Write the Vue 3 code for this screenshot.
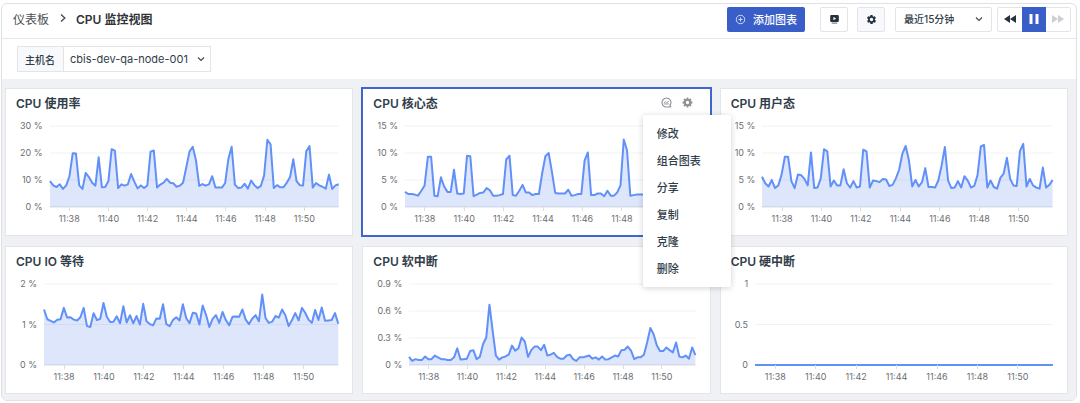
<script setup>
import { ref } from 'vue'

const host = ref('cbis-dev-qa-node-001')
const range = ref('最近15分钟')
const menuItems = ['修改', '组合图表', '分享', '复制', '克隆', '删除']
const times = ['11:38', '11:40', '11:42', '11:44', '11:46', '11:48', '11:50']

const charts = [
  {
    title: 'CPU 使用率', max: 30, ticks: ['30 %', '20 %', '10 %', '0 %'],
    data: [9.6, 8, 7.4, 8.4, 6.7, 8, 11.4, 19.9, 19.8, 8, 6.7, 12.6, 11.1, 9, 7.9, 18.4, 7.3, 7.4, 9.5, 21.4, 20.9, 7, 8.4, 7.9, 8.4, 12.2, 9.4, 6.9, 8, 7, 8, 20.5, 20.9, 7.2, 8.3, 9, 10.4, 9, 8.8, 7.5, 7.9, 9, 14.6, 20.5, 22.3, 17.3, 7.8, 8.5, 7.9, 8.4, 11.4, 7.2, 7.2, 7.2, 8.9, 17.9, 22.3, 8.3, 7, 7.2, 8.6, 6.8, 9.8, 8.1, 7, 7.8, 11.7, 24.9, 23.2, 7, 8.1, 7.3, 7.3, 9, 11.1, 17.7, 9.6, 8.1, 8, 20.6, 22.6, 7.2, 8.9, 8, 7.5, 6.8, 12, 6.7, 8, 8.4]
  },
  {
    title: 'CPU 核心态', max: 15, ticks: ['15 %', '10 %', '5 %', '0 %'], active: true,
    data: [2.8, 2.4, 2.4, 2.3, 2.1, 3, 4, 9.3, 9.3, 2.1, 2, 5.5, 3.8, 2.8, 2.8, 6.9, 2.5, 2.4, 2.5, 9.5, 9.4, 2, 2.3, 2.6, 2.7, 3.5, 3.1, 2.1, 2.1, 2.2, 2.4, 8.8, 9.5, 2.2, 2.1, 3, 4.1, 2.7, 2.7, 2.2, 2.4, 2.4, 6.2, 9.4, 10, 6.5, 2.6, 2.5, 2.5, 2.5, 3.2, 2.1, 2.2, 2.4, 2.4, 8.6, 10.1, 2.2, 2.2, 2.5, 2.5, 2, 3, 2.1, 2.1, 2.7, 4, 12.5, 10.5, 2.1, 2.2, 2.3, 2.3, 2.3, 2.8, 6.2, 2.6, 2.3, 2.4, 9.2, 9.8, 2.3, 2.5, 2.2, 2.1, 2.3, 3.4, 2.1, 2.3, 2.4]
  },
  {
    title: 'CPU 用户态', max: 15, ticks: ['15 %', '10 %', '5 %', '0 %'],
    data: [5.6, 4.4, 3.8, 5, 3.5, 4, 6, 9.3, 9.3, 4.8, 3.5, 6, 5.9, 5.2, 4, 10.1, 3.5, 3.6, 5.3, 10.7, 10.3, 3.8, 4.9, 4, 4, 7, 4.4, 3.6, 4.8, 3.6, 3.8, 10.6, 10.3, 3.6, 4.9, 4.8, 4.6, 5.2, 5.1, 3.9, 4.1, 5.3, 6.9, 9.9, 11.3, 8.6, 3.8, 5, 3.8, 4.6, 7.2, 3.7, 3.7, 3.6, 4.9, 7.7, 11.1, 4.9, 3.5, 3.6, 4.8, 3.6, 5.7, 4.9, 3.6, 3.9, 5.9, 11.2, 11.5, 3.6, 4.9, 3.7, 3.4, 5.4, 6.2, 9.1, 5.2, 4, 3.9, 10.4, 11.7, 3.8, 5.2, 4, 3.6, 3.4, 7.3, 3.6, 4.1, 5]
  },
  {
    title: 'CPU IO 等待', max: 2, ticks: ['2 %', '1 %', '0 %'],
    data: [1.37, 1.13, 1.09, 1.05, 1.12, 1.13, 1.41, 1.17, 1.18, 1.12, 1.1, 1.18, 1.41, 0.96, 0.94, 1.28, 1.11, 1.14, 1.53, 1.19, 1.06, 1.07, 1.2, 1.03, 1.45, 1.05, 1.23, 1.03, 1.21, 1, 1.51, 1.08, 1.01, 0.98, 1.15, 1.14, 1.5, 1.01, 0.96, 1.11, 1.18, 1.1, 1.5, 1.16, 1.03, 1.29, 1.27, 1, 1.47, 1.24, 0.94, 1.14, 1.23, 1.04, 1.31, 1.11, 0.98, 1.19, 1.2, 1.19, 1.37, 1.12, 1.01, 1.15, 1.23, 1.08, 1.74, 1.16, 1.04, 1.07, 1.21, 1.17, 1.37, 1.23, 0.96, 1.11, 1.28, 1.1, 1.41, 1.29, 1.12, 1.04, 1.36, 1.11, 1.42, 1.09, 1.1, 1.11, 1.28, 1.02]
  },
  {
    title: 'CPU 软中断', max: 0.9, ticks: ['0.9 %', '0.6 %', '0.3 %', '0 %'],
    data: [0.09, 0.045, 0.065, 0.055, 0.055, 0.095, 0.065, 0.065, 0.105, 0.085, 0.065, 0.063, 0.055, 0.055, 0.085, 0.185, 0.06, 0.065, 0.07, 0.155, 0.165, 0.065, 0.09, 0.23, 0.305, 0.67, 0.38, 0.105, 0.06, 0.085, 0.095, 0.115, 0.215, 0.16, 0.185, 0.305, 0.26, 0.09, 0.165, 0.205, 0.205, 0.165, 0.225, 0.105, 0.115, 0.135, 0.09, 0.07, 0.07, 0.105, 0.115, 0.065, 0.045, 0.085, 0.085, 0.095, 0.105, 0.07, 0.085, 0.06, 0.095, 0.06, 0.065, 0.085, 0.105, 0.095, 0.165, 0.17, 0.205, 0.16, 0.065, 0.085, 0.085, 0.115, 0.25, 0.41, 0.345, 0.22, 0.155, 0.155, 0.195, 0.165, 0.14, 0.25, 0.095, 0.085, 0.105, 0.07, 0.195, 0.11]
  },
  {
    title: 'CPU 硬中断', max: 1, ticks: ['1', '0.5', '0'],
    data: [0, 0, 0, 0]
  }
].map((c) => {
  const line = c.data
    .map((v, i) => `${((i / (c.data.length - 1)) * 100).toFixed(2)},${(100 - (v / c.max) * 100).toFixed(2)}`)
    .join(' ')
  const rules = c.ticks.slice(0, -1).map((_, i) => (i / (c.ticks.length - 1)) * 100)
  return { ...c, line, area: `0,100 ${line} 100,100`, rules }
})
</script>

<template>
  <div class="frame">
    <header class="topbar">
      <nav class="crumbs">
        <a href="#">仪表板</a>
        <svg class="crumb-arrow" viewBox="0 0 8 10"><path d="M2 1.5 5.8 5 2 8.5" /></svg>
        <h1>CPU 监控视图</h1>
      </nav>
      <button class="add" type="button">
        <svg viewBox="0 0 12 12"><circle cx="6" cy="6" r="4.6" /><path d="M6 3.8v4.4M3.8 6h4.4" /></svg>
        添加图表
      </button>
      <button class="square tv" type="button" aria-label="投屏">
        <svg viewBox="0 0 12 12">
          <path fill="#26323d" fill-rule="evenodd" d="M2.500 1.200h7q1.200 0 1.200 1.200v5.200q0 1.200-1.200 1.200h-7q-1.200 0-1.200-1.200v-5.200q0-1.200 1.200-1.200zM4.800 3.200v3.600l3-1.800z" />
          <path fill="#7f878f" d="M3 9.200h6v1.400h-6z" />
        </svg>
      </button>
      <button class="square tinted" type="button" aria-label="设置">
        <svg viewBox="0 0 24 24"><path fill="#26323d" d="M19.400 13a7.500 7.500 0 0 0 0-2l2.100-1.600a.5.5 0 0 0 .1-.7l-2-3.400a.5.5 0 0 0-.6-.2l-2.500 1a7.300 7.300 0 0 0-1.700-1l-.4-2.600a.5.500 0 0 0-.5-.5h-4a.5.500 0 0 0-.5.500l-.4 2.600a7.300 7.300 0 0 0-1.700 1l-2.500-1a.5.500 0 0 0-.6.200l-2 3.400a.5.500 0 0 0 .1.700L4.600 11a7.500 7.500 0 0 0 0 2l-2.100 1.600a.5.500 0 0 0-.1.700l2 3.400c.1.200.4.300.6.200l2.500-1a7.300 7.300 0 0 0 1.700 1l.4 2.600c0 .3.200.5.5.5h4c.3 0 .5-.2.5-.5l.4-2.600a7.300 7.300 0 0 0 1.700-1l2.500 1c.2.1.5 0 .6-.2l2-3.400a.5.500 0 0 0-.1-.7zM12 15.800a3.800 3.800 0 1 1 0-7.600 3.800 3.800 0 0 1 0 7.600z" /></svg>
      </button>
      <div class="pick range">
        <select v-model="range" aria-label="时间范围"><option>最近15分钟</option></select>
        <svg class="chev" viewBox="0 0 10 10"><path d="M2 3.500 5 6.500 8 3.500" /></svg>
      </div>
      <div class="player">
        <button type="button" aria-label="后退"><svg viewBox="0 0 14 10"><path d="M7 1v8L1 5zM13 1v8L7 5z" /></svg></button>
        <button type="button" class="on" aria-label="暂停"><svg viewBox="0 0 14 10"><path d="M2.500 0h3v10h-3zM8.500 0h3v10h-3z" /></svg></button>
        <button type="button" class="off" aria-label="前进" disabled><svg viewBox="0 0 14 10"><path d="M1 1v8l6-4zM7 1v8l6-4z" /></svg></button>
      </div>
    </header>

    <div class="filters">
      <div class="field">
        <label for="host">主机名</label>
        <div class="pick host">
          <select id="host" v-model="host"><option>cbis-dev-qa-node-001</option></select>
          <svg class="chev" viewBox="0 0 10 10"><path d="M2 3.500 5 6.500 8 3.500" /></svg>
        </div>
      </div>
    </div>

    <main class="board">
      <section v-for="c in charts" :key="c.title" class="card" :class="{ active: c.active }">
        <div class="head">
          <h2>{{ c.title }}</h2>
          <div v-if="c.active" class="tools">
            <button type="button" aria-label="探索">
              <svg viewBox="0 0 12 12" fill="none" stroke="#8d9196"><path stroke-width="1.200" d="M10.700 10.900H6A4.900 4.900 0 1 1 9.700 9.200L11 10.900" /><path d="M3.200 6.800 4.800 5l1.400 1.300L8.600 4.600M3.400 7.600h5.200" /></svg>
            </button>
            <button type="button" aria-label="图表设置" aria-haspopup="menu" aria-expanded="true">
              <svg viewBox="0 0 12 12" fill="none" stroke="#8d9196"><circle cx="6" cy="6" r="3" stroke-width="2.400" /><path stroke-width="2" d="M6 .6v1.600M6 9.800v1.600M.6 6h1.600M9.800 6h1.600M2.200 2.200l1.100 1.100M8.700 8.700l1.100 1.100M2.200 9.800l1.100-1.100M8.700 3.300l1.100-1.100" /></svg>
            </button>
          </div>
        </div>
        <div class="chart">
          <div class="yaxis"><span v-for="t in c.ticks" :key="t">{{ t }}</span></div>
          <svg class="plot" viewBox="0 0 100 100" preserveAspectRatio="none">
            <line v-for="y in c.rules" :key="y" class="rule" x1="0" x2="100" :y1="y" :y2="y" />
            <line class="base" x1="0" x2="100" y1="100" y2="100" />
            <polygon class="area" :points="c.area" />
            <polyline class="line" :points="c.line" />
          </svg>
          <div class="xaxis"><span v-for="t in times" :key="t">{{ t }}</span></div>
        </div>
        <ul v-if="c.active" class="menu" role="menu">
          <li v-for="m in menuItems" :key="m" role="none"><button type="button" role="menuitem">{{ m }}</button></li>
        </ul>
      </section>
    </main>
  </div>
</template>

<style>
body {
  background: #fff;
}
</style>

<style scoped>
* {
  box-sizing: border-box;
}
.frame {
  margin: 3px 3px 2px 1px;
  border: 1px solid #e0e1e3;
  border-radius: 6px;
  overflow: hidden;
  background: #fff;
  color: #313d49;
  font-family: Inter, "Noto Sans CJK SC", sans-serif;
  font-size: 11px;
}
button,
select {
  font: inherit;
  color: inherit;
  margin: 0;
  padding: 0;
  border: 0;
  border-radius: 0;
  background: none;
}
h1,
h2,
ul {
  margin: 0;
  padding: 0;
}
svg {
  display: block;
}
.topbar {
  display: flex;
  align-items: center;
  height: 35px;
  padding: 0 5px 4px 11px;
  border-bottom: 1px solid #e6e7e9;
}
.crumbs {
  display: flex;
  align-items: center;
  flex: 1;
  padding-bottom: 2px;
  font-size: 12px;
  white-space: nowrap;
}
.crumbs a {
  color: #4c4f53;
  text-decoration: none;
}
.crumbs h1 {
  font-size: 12px;
  font-weight: 600;
  color: #303236;
}
.crumb-arrow {
  width: 8px;
  height: 10px;
  margin: 0 9px 0 10px;
  fill: none;
  stroke: #4c4f53;
  stroke-width: 1.4;
}
.add {
  display: flex;
  align-items: center;
  gap: 7px;
  height: 25px;
  padding: 0 8px;
  margin-right: 15px;
  border-radius: 2px;
  background: #3a5ec8;
  color: #fff;
  font-weight: 500;
}
.add svg {
  width: 11px;
  height: 11px;
  fill: none;
  stroke: #dbe3f8;
}
.square {
  display: flex;
  align-items: center;
  justify-content: center;
  width: 28px;
  height: 25px;
  margin-right: 9px;
  border: 1px solid #e2e4e8;
  border-radius: 2px;
}
.square svg {
  width: 11px;
  height: 11px;
}
.tinted {
  background: #f8f9fc;
}
.pick {
  display: grid;
  align-items: center;
}
.pick > * {
  grid-area: 1 / 1;
}
.pick select {
  appearance: none;
  width: 100%;
  height: 23px;
}
.chev {
  justify-self: end;
  width: 10px;
  height: 10px;
  fill: none;
  stroke: #414b55;
  stroke-width: 1.2;
  pointer-events: none;
}
.range {
  width: 97px;
  margin: 0 5px 0 1px;
  border: 1px solid #e2e4e8;
  border-radius: 2px;
  font-size: 10px;
  font-weight: 500;
}
.range select {
  padding-left: 8px;
}
.range .chev {
  margin-right: 7px;
}
.player {
  display: flex;
  border: 1px solid #e2e4e8;
  border-radius: 2px;
}
.player button {
  display: flex;
  align-items: center;
  justify-content: center;
  width: 24px;
  height: 23px;
  fill: #26323d;
}
.player svg {
  width: 14px;
  height: 10px;
}
.player .on {
  margin: -1px 0;
  height: 25px;
  background: #3a5ec8;
  fill: #fff;
}
.player .off {
  fill: #cbced3;
}
.filters {
  padding: 7px 15px;
}
.field {
  display: inline-flex;
  vertical-align: top;
  border: 1px solid #e2e4e8;
}
.field label {
  display: flex;
  align-items: center;
  padding: 0 8px 0 7px;
  border-right: 1px solid #e2e4e8;
  background: #f8f9fc;
  font-size: 10px;
  font-weight: 500;
}
.host {
  width: 146px;
  height: 24px;
}
.host select {
  padding-left: 6px;
}
.host .chev {
  margin-right: 4px;
}
.board {
  display: grid;
  grid-template-columns: repeat(3, minmax(0, 1fr));
  gap: 10px 9px;
  padding: 9px 8px 6px 3px;
  background: #f0f1f4;
}
.card {
  position: relative;
  padding-bottom: 9px;
  border: 1px solid #e3e5e9;
  background: #fff;
}
.active {
  border-color: #3f66cc;
  box-shadow: 0 0 0 1px #3f66cc;
}
.head {
  display: flex;
  align-items: center;
  justify-content: space-between;
  height: 26px;
  padding: 0 17px 0 10px;
}
.head h2 {
  font-size: 12px;
  font-weight: 600;
}
.tools {
  display: flex;
  gap: 10px;
}
.tools svg {
  width: 11px;
  height: 11px;
}
.chart {
  display: grid;
  grid-template-columns: auto minmax(0, 1fr);
  column-gap: 7px;
  padding: 11px 14px 0 14px;
}
.yaxis {
  display: flex;
  flex-direction: column;
  justify-content: space-between;
  margin: -6px 0;
  color: #6c6f73;
  font-size: 9px;
  line-height: 12px;
  text-align: right;
}
.plot {
  width: 100%;
  height: 81px;
  overflow: visible;
}
.plot * {
  vector-effect: non-scaling-stroke;
}
.rule {
  stroke: #f1f2f3;
}
.base {
  stroke: #dcdee1;
}
.area {
  fill: #5b84ee;
  fill-opacity: 0.2;
}
.line {
  fill: none;
  stroke: #6191f8;
  stroke-width: 2;
  stroke-linejoin: round;
}
.xaxis {
  grid-column: 2;
  display: grid;
  grid-template-columns: repeat(7, minmax(0, 1fr));
  width: 95%;
  color: #6c6f73;
  font-size: 9px;
  line-height: 15px;
}
.xaxis span {
  display: flex;
  flex-direction: column;
  align-items: center;
}
.xaxis span::before {
  content: "";
  width: 1px;
  height: 4px;
  background: #dcdee1;
}
.menu {
  position: absolute;
  z-index: 1;
  top: 26px;
  right: -21px;
  width: 88px;
  padding: 4px 0 6px;
  border-radius: 2px;
  background: #fff;
  box-shadow: 0 1px 6px rgba(0, 0, 0, 0.18);
  font-weight: 500;
  list-style: none;
}
.menu button {
  display: block;
  width: 100%;
  height: 27px;
  padding-left: 14px;
  text-align: left;
}
</style>
